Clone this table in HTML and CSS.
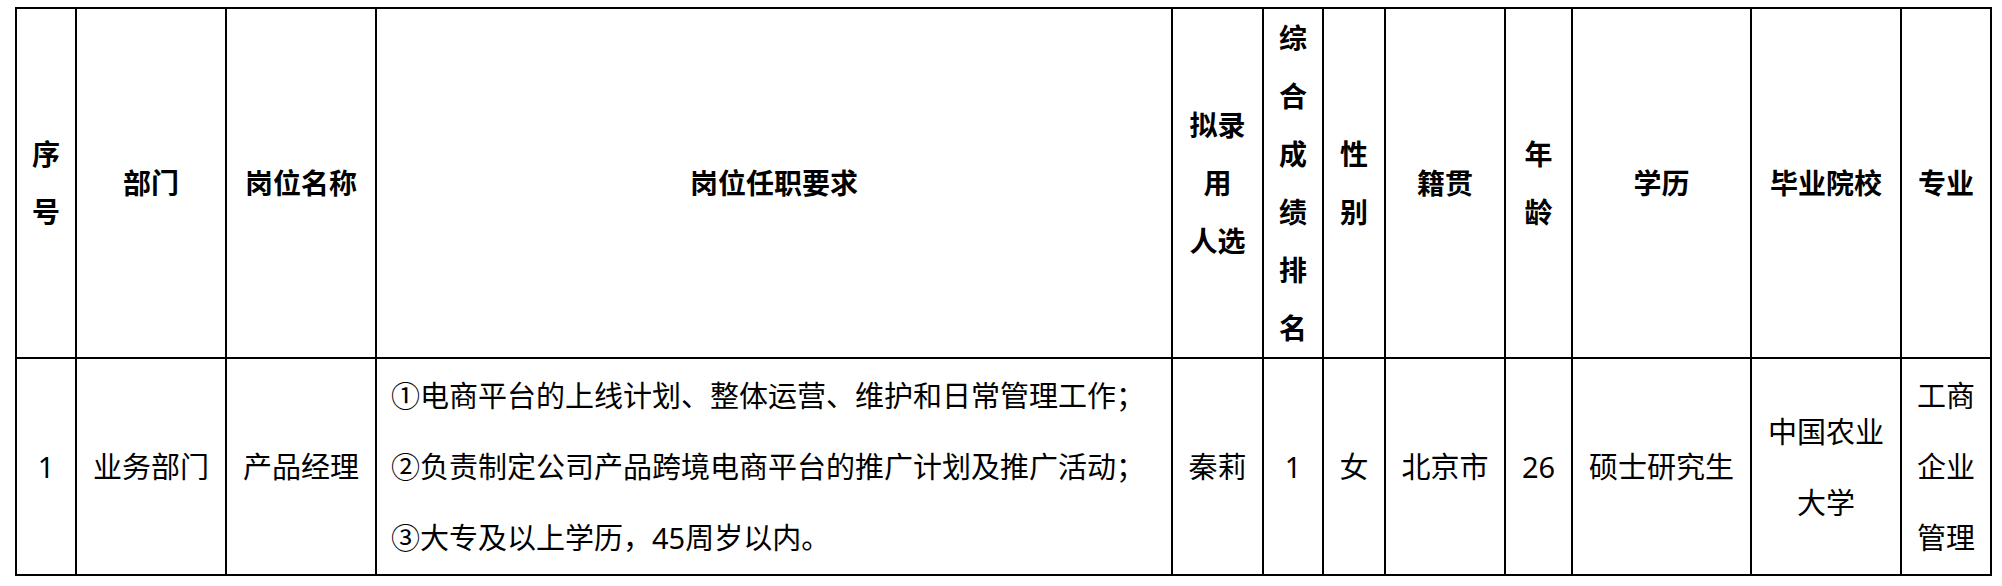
FILE: index.html
```html
<!DOCTYPE html>
<html lang="zh-CN">
<head>
<meta charset="utf-8">
<title>拟录用人员公示</title>
<link rel="stylesheet" href="styles.css">
</head>
<body>
<div class="sheet" role="table">
  <div class="cell head">序<br>号</div>
  <div class="cell head">部门</div>
  <div class="cell head">岗位名称</div>
  <div class="cell head">岗位任职要求</div>
  <div class="cell head">拟录<br>用<br>人选</div>
  <div class="cell head">综<br>合<br>成<br>绩<br>排<br>名</div>
  <div class="cell head">性<br>别</div>
  <div class="cell head">籍贯</div>
  <div class="cell head">年<br>龄</div>
  <div class="cell head">学历</div>
  <div class="cell head">毕业院校</div>
  <div class="cell head">专业</div>

  <div class="cell body">1</div>
  <div class="cell body">业务部门</div>
  <div class="cell body">产品经理</div>
  <div class="cell body desc">
    <p>①电商平台的上线计划、整体运营、维护和日常管理工作；</p>
    <p>②负责制定公司产品跨境电商平台的推广计划及推广活动；</p>
    <p>③大专及以上学历<span class="fw">，</span>45周岁以内。</p>
  </div>
  <div class="cell body">秦莉</div>
  <div class="cell body">1</div>
  <div class="cell body">女</div>
  <div class="cell body">北京市</div>
  <div class="cell body">26</div>
  <div class="cell body">硕士研究生</div>
  <div class="cell body">中国农业<br>大学</div>
  <div class="cell body">工商<br>企业<br>管理</div>
</div>
</body>
</html>
```

FILE: styles.css
```css
html, body {
  margin: 0;
  padding: 0;
  background: #ffffff;
}

body {
  font-family: "Noto Sans", "Noto Sans CJK SC", sans-serif;
  color: #000000;
}

.sheet {
  display: grid;
  grid-template-columns: 60px 150px 150px 796px 91px 60px 62px 120px 67px 179px 150px 90px;
  grid-template-rows: 350px 217px;
  width: max-content;
  margin: 7px 0 0 15px;
  border-top: 2px solid #000;
  border-left: 2px solid #000;
}

.cell {
  box-sizing: border-box;
  border-right: 2px solid #000;
  border-bottom: 2px solid #000;
  display: flex;
  align-items: center;
  justify-content: center;
  text-align: center;
  overflow: hidden;
  white-space: nowrap;
}

.head {
  font-size: 28px;
  font-weight: 700;
  line-height: 58px;
}

.body {
  font-size: 29px;
  font-weight: 400;
  line-height: 71px;
}

.desc {
  flex-direction: column;
  align-items: flex-start;
  justify-content: center;
  text-align: left;
  padding-left: 14px;
}

.desc p {
  margin: 0;
}

.fw {
  display: inline-block;
  width: 1em;
  text-align: left;
}
```
